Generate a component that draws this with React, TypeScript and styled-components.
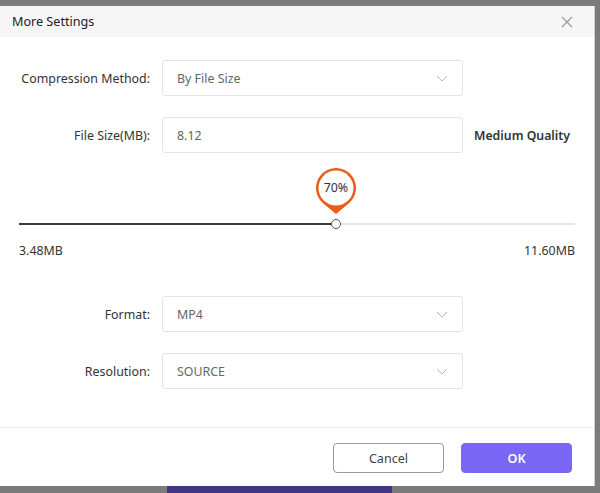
import React from 'react';
import styled, { createGlobalStyle } from 'styled-components';

const GlobalStyle = createGlobalStyle`
    html, body {
        margin: 0;
        padding: 0;
        background: #7b7b7b;
        font-family: 'Noto Sans', 'Open Sans', sans-serif;
    }
    * {
        box-sizing: border-box;
    }
`;

const Page = styled.div`
    width: 600px;
    height: 493px;
    padding-top: 6px;
    display: flex;
    flex-direction: column;
    background: #7b7b7b;
    overflow: hidden;
`;

const Dialog = styled.div`
    width: 595px;
    height: 480px;
    display: flex;
    flex-direction: column;
    background: #ffffff;
    border-right: 1px solid #d0d0d0;
`;

const Header = styled.div`
    height: 31px;
    padding: 0 11px 0 12px;
    display: flex;
    align-items: center;
    justify-content: space-between;
    background: #f6f6f6;
    font-size: 12.6px;
    color: #222;
`;

const CloseButton = styled.button`
    width: 16px;
    height: 16px;
    padding: 0;
    margin-right: 8px;
    border: none;
    background: none;
    display: flex;
    align-items: center;
    justify-content: center;
`;

const Body = styled.div`
    flex: 1;
    padding: 23px 19px 0 19px;
    display: flex;
    flex-direction: column;
`;

const FormRow = styled.div<{ top?: number }>`
    display: grid;
    grid-template-columns: 131px 301px auto;
    column-gap: 12px;
    align-items: center;
    margin-top: ${(p) => p.top || 0}px;
`;

const Label = styled.label`
    text-align: right;
    font-size: 12.4px;
    color: #333;
    white-space: nowrap;
`;

const Field = styled.div`
    height: 36px;
    padding: 0 14px;
    display: flex;
    align-items: center;
    justify-content: space-between;
    border: 1px solid #e4e4e4;
    border-radius: 3px;
    font-size: 12.4px;
    color: #666;
`;

const Note = styled.span`
    font-size: 12.3px;
    font-weight: 600;
    color: #333;
    margin-left: -1px;
    white-space: nowrap;
`;

const SliderSection = styled.div`
    margin-top: 16px;
`;

const SliderArea = styled.div`
    position: relative;
    height: 64px;
`;

const Track = styled.div`
    position: absolute;
    left: 0;
    right: 0;
    top: 54px;
    height: 2px;
    background: #e6e6ea;
`;

const TrackFill = styled.div`
    height: 2px;
    background: #3a3a3a;
`;

const Thumb = styled.div`
    position: absolute;
    top: 50px;
    width: 10px;
    height: 10px;
    margin-left: -5px;
    border-radius: 50%;
    background: #fff;
    border: 1.5px solid #555;
`;

const Pin = styled.div`
    position: absolute;
    top: -2px;
    width: 42px;
    height: 50px;
    margin-left: -21px;
`;

const PinText = styled.span`
    position: absolute;
    top: 12px;
    left: 0;
    right: 0;
    text-align: center;
    font-size: 12.4px;
    color: #333;
`;

const Ends = styled.div`
    margin-top: 9px;
    display: flex;
    justify-content: space-between;
    font-size: 12.4px;
    color: #333;
    line-height: 18px;
`;

const Footer = styled.div`
    height: 59px;
    padding: 15px 22px 0 0;
    display: flex;
    justify-content: flex-end;
    gap: 17px;
    border-top: 1px solid #ececec;
`;

const Button = styled.button<{ primary?: boolean }>`
    width: 111px;
    height: 30px;
    border-radius: 4px;
    font-family: inherit;
    font-size: 12.6px;
    font-weight: ${(p) => (p.primary ? 600 : 400)};
    color: ${(p) => (p.primary ? '#fff' : '#444')};
    background: ${(p) => (p.primary ? '#7b67f6' : '#fff')};
    border: 1px solid ${(p) => (p.primary ? '#7b67f6' : '#9a9a9a')};
`;

const Taskbar = styled.div`
    height: 7px;
    padding-left: 167px;
    display: flex;
`;

const TaskbarItem = styled.div`
    width: 225px;
    height: 100%;
    background: #3f3785;
`;

function Chevron() {
    return (
        <svg width='12' height='7' viewBox='0 0 12 7'>
            <path d='M1 1 L6 6 L11 1' fill='none' stroke='#b8b8b8' strokeWidth='1' />
        </svg>
    );
}

function Select({ value }: { value: string }) {
    return (
        <Field>
            <span>{value}</span>
            <Chevron />
        </Field>
    );
}

const percent = 57;

export default function App() {
    return (
        <Page>
            <GlobalStyle />
            <Dialog>
                <Header>
                    <span>More Settings</span>
                    <CloseButton>
                        <svg width='12' height='12' viewBox='0 0 12 12'>
                            <path d='M1 1 L11 11 M11 1 L1 11' stroke='#9a9a9a' strokeWidth='1.2' />
                        </svg>
                    </CloseButton>
                </Header>
                <Body>
                    <FormRow>
                        <Label>Compression Method:</Label>
                        <Select value='By File Size' />
                    </FormRow>
                    <FormRow top={21}>
                        <Label>File Size(MB):</Label>
                        <Field>8.12</Field>
                        <Note>Medium Quality</Note>
                    </FormRow>
                    <SliderSection>
                        <SliderArea>
                            <Track>
                                <TrackFill style={{ width: `${percent}%` }} />
                            </Track>
                            <Pin style={{ left: `${percent}%` }}>
                                <svg width='42' height='50' viewBox='0 0 42 50'>
                                    <path d='M21 47 L9 37 A20 20 0 1 1 33 37 Z' fill='#ea5b17' />
                                    <circle cx='21' cy='21' r='17.5' fill='#fff' />
                                </svg>
                                <PinText>70%</PinText>
                            </Pin>
                            <Thumb style={{ left: `${percent}%` }} />
                        </SliderArea>
                        <Ends>
                            <span>3.48MB</span>
                            <span>11.60MB</span>
                        </Ends>
                    </SliderSection>
                    <FormRow top={36}>
                        <Label>Format:</Label>
                        <Select value='MP4' />
                    </FormRow>
                    <FormRow top={21}>
                        <Label>Resolution:</Label>
                        <Select value='SOURCE' />
                    </FormRow>
                </Body>
                <Footer>
                    <Button>Cancel</Button>
                    <Button primary>OK</Button>
                </Footer>
            </Dialog>
            <Taskbar>
                <TaskbarItem />
            </Taskbar>
        </Page>
    );
}
